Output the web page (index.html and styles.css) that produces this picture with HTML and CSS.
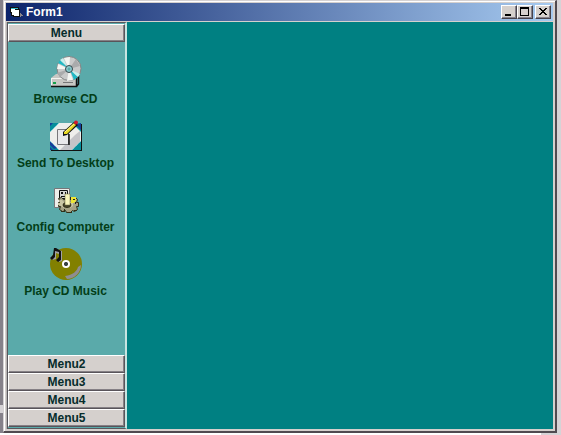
FILE: index.html
```
<!DOCTYPE html>
<html lang="en">
<head>
<meta charset="utf-8">
<meta name="viewport" content="width=device-width, initial-scale=1">
<title>Form1</title>
<link rel="stylesheet" href="styles.css">
</head>
<body>
<main class="window">
  <header class="titlebar">
    <svg class="app-icon" viewBox="0 0 13 11" shape-rendering="crispEdges" aria-hidden="true">
      <path fill="#111" d="M0 0h9v2h1v8H3V9H1V6H0z"/>
      <path fill="#35b8c8" d="M1 1h7v1H1z"/>
      <path fill="#fff" d="M1 2h4v1h4v6H4V8H2V5H1z"/>
      <path fill="#88858c" d="M10 6h1v1h1v1h1v1h-2v1h-1z"/>
    </svg>
    <h1 class="title">Form1</h1>
    <div class="controls">
      <button class="control" type="button" aria-label="Minimize">
        <svg viewBox="0 0 12 10" shape-rendering="crispEdges"><path d="M2 7h6v2H2z"/></svg>
      </button>
      <button class="control" type="button" aria-label="Maximize">
        <svg viewBox="0 0 12 10" shape-rendering="crispEdges"><path fill-rule="evenodd" d="M1 0h9v9H1zM2 2v6h7V2z"/></svg>
      </button>
      <button class="control control-close" type="button" aria-label="Close">
        <svg viewBox="0 0 12 10" shape-rendering="crispEdges"><path d="M2 1h2v1h1v1h2V2h1V1h2v1H9v1H8v1H7v1h1v1h1v1h1v1H8V7H7V6H5v1H4v1H2V7h1V6h1V5h1V4H4V3H3V2H2z"/></svg>
      </button>
    </div>
  </header>
  <div class="client">
    <nav class="sidebar">
      <button class="tab" type="button">Menu</button>
      <div class="items">
        <button class="item" type="button">
          <svg class="icon" viewBox="0 0 32 32" aria-hidden="true">
            <path fill="#c8c8c4" d="M1 22l5-4h22l-2 4v8H1z"/>
            <path fill="#f4f4f0" d="M1 22h24v1H2v6H1z"/>
            <path fill="none" stroke="#111" stroke-width="1.500" d="M1 30.500h25.500V22l2-2v8l-2 2.500"/>
            <path fill="#777" d="M13 26h10v1H13z"/><path fill="#16a04a" d="M3 26h3v2H3z"/>
            <circle cx="19" cy="12.500" r="12" fill="#c9caca" stroke="#838585"/>
            <path fill="#f4f5f2" d="M19 13L14 2l6-1zM19 13l4 11-6 1zM19 13L8 8l-1 5z"/>
            <path fill="#aaabac" d="M19 13l7-10 4 7zM19 13L10 21l-3-4z"/>
            <path fill="#20b9c5" d="M18 12L8 7l2-3zM20 14l8 7-4 3z"/>
            <path fill="#c6f1ee" d="M17 10l-7-6 3-2zM21 14l9 4-2 3z"/>
            <circle cx="19" cy="13" r="3.500" fill="#8bcdd2" stroke="#34464a"/>
            <circle cx="19" cy="13" r="1.500" fill="#5aaaaa"/>
          </svg>
          <span>Browse CD</span>
        </button>
        <button class="item" type="button">
          <svg class="icon" viewBox="0 0 32 32" aria-hidden="true">
            <path fill="#111" d="M1 4h31v27H1z"/>
            <path fill="#eeeeec" d="M0 3h31v27H0z"/>
            <path fill="#c4c4c8" d="M30 11v12l-7 7H10l15-15z"/>
            <path fill="#078e9b" d="M0 3h9L0 12zM31 3v9l-9-9zM0 21l9 9H0zM31 21v9h-9z"/>
            <path fill="#183e9b" d="M0 3h3L0 6zM31 3v7l-5-5zM0 27l3 3H0zM0 21l7 7-3 1-4-4z"/>
            <path fill="none" stroke="#8bdde0" stroke-dasharray="1 1" d="M9 3l-9 9M22 3l9 9M0 21l9 9M31 21l-9 9"/>
            <path fill="#e8e8ea" stroke="#77777b" d="M7.500 9.500h11v15h-11z"/>
            <path fill="none" stroke="#111" stroke-width="1.500" d="M19 14v11"/>
            <path fill="#111" d="M13 16v-4L24 2l4 3-11 10z"/>
            <path fill="#e8d820" d="M14 14v-2L24 3l2 2-9 9z"/>
            <path fill="none" stroke="#fff3a0" d="M15 12l9-8"/>
            <circle cx="26" cy="2.500" r="2" fill="#d01831"/>
          </svg>
          <span>Send To Desktop</span>
        </button>
        <button class="item" type="button">
          <svg class="icon" viewBox="0 0 32 32" aria-hidden="true">
            <path fill="#eeeeea" stroke="#77777a" d="M4.500 4.500h15v19h-15z"/>
            <path fill="#d5d5d2" stroke="#111" d="M9.500 6.500h8v8h-8z"/>
            <path fill="#111" d="M11 8h2v2h-2zM15 8h1v2h-1zM11 12h5v1h-5z"/>
            <g stroke="#302f18" fill="#a5a285">
              <path d="M8.500 14.500l3-1 2 2h9l3-2 2 2-1 3h2v4h-2l1 3-3 2-2-1-2 2h-4l-1-2-3 1-3-2 1-3h-2v-4h2z"/>
              <path fill="#c9c6a4" stroke="none" d="M9 16h3l2 2h9v4l-3 2h-6l-3-2-3-1v-2h2z"/>
              <ellipse cx="17" cy="21" rx="4" ry="2.500" fill="#48462c"/>
            </g>
            <path fill="#302f18" d="M11 27h3v-2h1v3h-4zM18 28h4v1h-4zM24 26h3v1h-3z"/>
            <path fill="#f8f5bc" stroke="#66613b" stroke-width=".5" d="M15 10h5v11h-5z"/>
            <path fill="#ede633" d="M21 13h5v4l-2 2h-3z"/>
            <path fill="#222" d="M20 13h1v3h-1zM23 15h2v1h-2zM25 18h1v2h-1z"/>
          </svg>
          <span>Config Computer</span>
        </button>
        <button class="item" type="button">
          <svg class="icon" viewBox="0 0 32 32" aria-hidden="true">
            <circle cx="16" cy="16" r="16" fill="#828000"/>
            <path fill="#8e8d91" d="M31 17c0 8-7 14-14 14l-2-3c8-1 12-5 13-9z"/>
            <circle cx="16" cy="16" r="4" fill="#fff"/>
            <circle cx="16" cy="16" r="2" fill="#222"/>
            <path fill="#5aaaaa" d="M15.500 15.500h1v1h-1z"/>
            <path fill="#a1a0a5" d="M5 1l7 2v10l-3 1V6L6 5v6l-4 1V9l2-1z"/>
            <path fill="#111" d="M4 0h2l5 3v9l-3 2-2-2 3-3V4L5 3v6l-3 3-2-2 3-3z"/>
          </svg>
          <span>Play CD Music</span>
        </button>
      </div>
      <button class="tab" type="button">Menu2</button>
      <button class="tab" type="button">Menu3</button>
      <button class="tab" type="button">Menu4</button>
      <button class="tab" type="button">Menu5</button>
    </nav>
    <section class="workspace" aria-label="Workspace"></section>
  </div>
</main>
</body>
</html>
```
FILE: styles.css
```
* { box-sizing: border-box; }

body {
  display: flex;
  min-height: 100vh;
  margin: 0;
  padding: 0 4px 2px 3px;
  background:
    linear-gradient(#d6d3d6, #d6d3d6) left bottom 22px / 3px 8px no-repeat,
    linear-gradient(#fff, #fff) right 20px bottom / 100% 2px no-repeat,
    linear-gradient(90deg, #85818a 3px, #d6d3d6 3px);
  font: bold 12px/16px "Liberation Sans", Arial, sans-serif;
}

button { padding: 0; font: inherit; }

.window {
  display: flex;
  flex: 1;
  flex-direction: column;
  padding: 2px;
  border: 1px solid #d5d2d3;
  border-right: 2px solid #504a50;
  border-bottom: 2px solid #504a50;
  background: #d5d0cd;
  box-shadow: inset 1px 1px #fff;
}

.titlebar {
  display: flex;
  align-items: center;
  height: 18px;
  margin-bottom: 1px;
  padding: 0 2px 0 4px;
  background: linear-gradient(90deg, #0d246b, #a6caf0);
}

.app-icon { width: 13px; height: 11px; }

.title {
  margin: 0 auto 0 3px;
  color: #fff;
  font-size: 12px;
}

.controls { display: flex; }

.control {
  width: 16px;
  height: 14px;
  border: 1px solid;
  border-color: #fff #46424a #46424a #fff;
  background: #d5d0cd;
  box-shadow: inset -1px -1px #85808a;
}

.control svg { display: block; width: 12px; height: 10px; margin: 1px; }

.control-close { margin-left: 2px; }

.client {
  display: flex;
  flex: 1;
  border-left: 1px solid #b5b2b3;
}

.sidebar {
  display: flex;
  flex: 0 0 120px;
  flex-direction: column;
  padding: 1px 0;
  border: 1px solid #59575c;
  border-right: 2px solid #c8e4e1;
  background: #5aaaaa;
}

.tab {
  height: 18px;
  border: 1px solid;
  border-color: #fff #59545a #59545a #fff;
  background: #d5d0cd;
  box-shadow: inset -1px -1px #858085;
  color: #062c2b;
}

.items {
  display: flex;
  flex: 1;
  flex-direction: column;
  gap: 13px;
  padding: 14px 2px 0 0;
}

.item {
  display: flex;
  flex-direction: column;
  align-items: center;
  gap: 3px;
  border: 0;
  background: none;
  color: #033e18;
  white-space: nowrap;
}

.icon { width: 32px; height: 32px; overflow: visible; }

.workspace { flex: 1; background: #008082; }
```
